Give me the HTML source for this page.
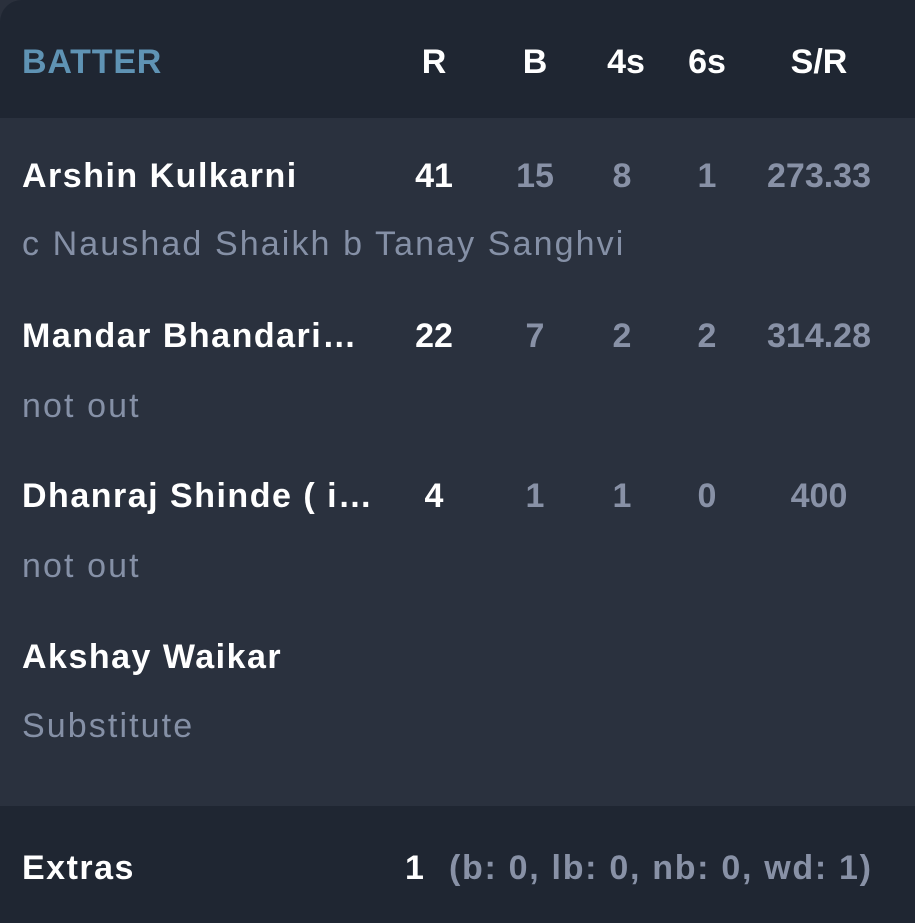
<!DOCTYPE html>
<html><head><style>
body{margin:0;width:915px;height:923px;background:#2a303c;font-family:"Liberation Sans",sans-serif;overflow:hidden;position:relative}
.hd{position:absolute;left:0;top:0;width:915px;height:118px;background:#1f2632;border-top-left-radius:22px}
.bd{position:absolute;left:0;top:118px;width:915px;height:688px;background:#2a313e}
.ft{position:absolute;left:0;top:806px;width:915px;height:117px;background:#1f2632}
.t{position:absolute;font-size:34px;line-height:40px;white-space:nowrap}
.c{transform:translateX(-50%)}
.w{color:#fff;font-weight:bold}
.g{color:#8891a6;font-weight:bold}
.d{color:#8590a6;letter-spacing:2.1px}
.n{letter-spacing:1.5px}
</style></head><body>
<div class="hd"></div><div class="bd"></div><div class="ft"></div>
<div class="t" style="left:22px;top:42px;color:#5f93b4;font-weight:bold;letter-spacing:0.8px">BATTER</div>
<div class="t w c" style="left:434px;top:42px">R</div>
<div class="t w c" style="left:535px;top:42px">B</div>
<div class="t w c" style="left:626px;top:42px">4s</div>
<div class="t w c" style="left:707px;top:42px">6s</div>
<div class="t w c" style="left:819px;top:42px">S/R</div>

<div class="t w n" style="left:22px;top:156px">Arshin Kulkarni</div>
<div class="t w c" style="left:434px;top:156px">41</div>
<div class="t g c" style="left:535px;top:156px">15</div>
<div class="t g c" style="left:622px;top:156px">8</div>
<div class="t g c" style="left:707px;top:156px">1</div>
<div class="t g c" style="left:819px;top:156px">273.33</div>
<div class="t d" style="left:22px;top:224px">c Naushad Shaikh b Tanay Sanghvi</div>

<div class="t w n" style="left:22px;top:316px">Mandar Bhandari…</div>
<div class="t w c" style="left:434px;top:316px">22</div>
<div class="t g c" style="left:535px;top:316px">7</div>
<div class="t g c" style="left:622px;top:316px">2</div>
<div class="t g c" style="left:707px;top:316px">2</div>
<div class="t g c" style="left:819px;top:316px">314.28</div>
<div class="t d" style="left:22px;top:386px">not out</div>

<div class="t w n" style="left:22px;top:476px">Dhanraj Shinde ( i…</div>
<div class="t w c" style="left:434px;top:476px">4</div>
<div class="t g c" style="left:535px;top:476px">1</div>
<div class="t g c" style="left:622px;top:476px">1</div>
<div class="t g c" style="left:707px;top:476px">0</div>
<div class="t g c" style="left:819px;top:476px">400</div>
<div class="t d" style="left:22px;top:546px">not out</div>

<div class="t w n" style="left:22px;top:637px">Akshay Waikar</div>
<div class="t d" style="left:22px;top:706px">Substitute</div>

<div class="t w n" style="left:22px;top:848px">Extras</div>
<div class="t w" style="left:405px;top:848px">1</div>
<div class="t g" style="left:449px;top:848px;letter-spacing:1.7px">(b: 0, lb: 0, nb: 0, wd: 1)</div>
</body></html>
